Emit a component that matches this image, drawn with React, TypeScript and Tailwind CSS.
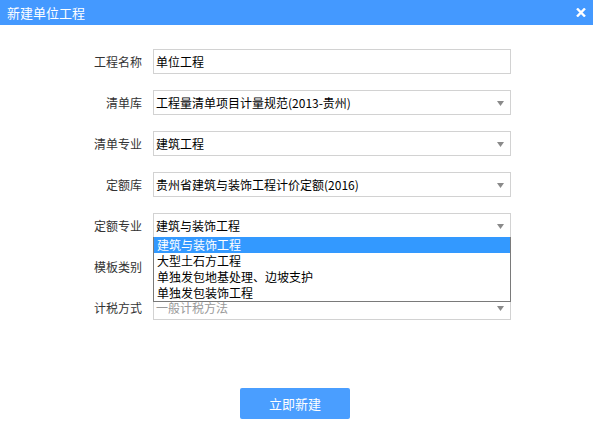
import React from 'react';

const font = { fontFamily: '"Noto Sans CJK SC", "Noto Sans", sans-serif' };

const Arrow = () => (
  <svg width="7" height="5" viewBox="0 0 7 5" className="absolute right-[6px] top-[10px]">
    <polygon points="0,0 7,0 3.5,5" fill="#8a8a8a" />
  </svg>
);

type Row = { label: string; value: string; select?: boolean; muted?: boolean };

const rows: Row[] = [
  { label: '工程名称', value: '单位工程' },
  { label: '清单库', value: '工程量清单项目计量规范(2013-贵州)', select: true },
  { label: '清单专业', value: '建筑工程', select: true },
  { label: '定额库', value: '贵州省建筑与装饰工程计价定额(2016)', select: true },
  { label: '定额专业', value: '建筑与装饰工程', select: true },
  { label: '模板类别', value: '', select: true },
  { label: '计税方式', value: '一般计税方法', select: true, muted: true },
];

const options = ['建筑与装饰工程', '大型土石方工程', '单独发包地基处理、边坡支护', '单独发包装饰工程'];

const App = () => {
  return (
    <div className="w-[593px] h-[421px] bg-white overflow-hidden" style={font}>
      <div className="h-[25px] bg-[#4499ff] flex items-center justify-between pl-[7px] pr-[7px]">
        <span className="text-white text-[13px] leading-none">新建单位工程</span>
        <svg width="10" height="9" viewBox="0 0 10 9">
          <path d="M1 0.5 L9 8.5 M9 0.5 L1 8.5" stroke="#fff" strokeWidth="2.4" />
        </svg>
      </div>

      <div className="pt-[24px] flex flex-col gap-[16px]">
        {rows.map((row, i) => (
          <div key={row.label} className="flex items-center h-[25px]">
            <div className="w-[143px] text-right text-[12px] text-[#333] pr-[1px]">{row.label}</div>
            <div className="relative ml-[10px] w-[358px] h-[25px] border border-[#d2d2d2] bg-white flex items-center pl-[2px]">
              <span className={`text-[12px] leading-none ${row.muted ? 'text-[#999]' : 'text-black'}`}>{row.value}</span>
              {row.select && <Arrow />}
              {i === 4 && (
                <div className="absolute left-[-1px] top-[23px] w-[358px] border border-[#7a7a7a] border-t-0 bg-white z-10">
                  {options.map((opt, j) => (
                    <div
                      key={opt}
                      className={`h-[16px] flex items-center pl-[3px] text-[12px] leading-none ${j === 0 ? 'bg-[#3399ff] text-white' : 'text-black'}`}
                    >
                      {opt}
                    </div>
                  ))}
                </div>
              )}
            </div>
          </div>
        ))}
      </div>

      <div className="flex justify-center mt-[68px] pr-[3px]">
        <button className="w-[110px] h-[31px] rounded-[2px] bg-[#4a9eff] text-white text-[13px]">立即新建</button>
      </div>
    </div>
  );
};

export default App;
